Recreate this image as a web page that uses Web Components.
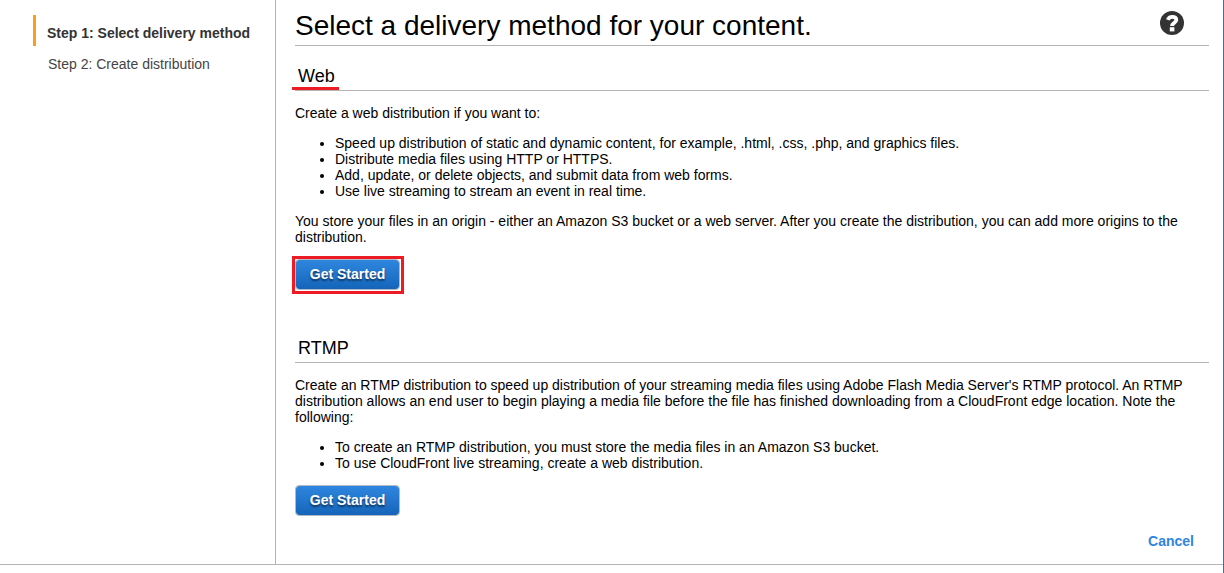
<!DOCTYPE html>
<html lang="en">
<head>
<meta charset="utf-8">
<title>Select a delivery method</title>
<style>
  html, body { height: 100%; margin: 0; }
  body { background: #fff; color: #000; font: 14px/16px "Liberation Sans", Arial, sans-serif; }
</style>
</head>
<body>
<distribution-wizard>
  <wizard-step slot="steps" current>Step 1: Select delivery method</wizard-step>
  <wizard-step slot="steps">Step 2: Create distribution</wizard-step>

  <page-title>Select a delivery method for your content.</page-title>

  <delivery-method name="Web" marked>
    <p>Create a web distribution if you want to:</p>
    <bullet-list>
      <bullet-item>Speed up distribution of static and dynamic content, for example, .html, .css, .php, and graphics files.</bullet-item>
      <bullet-item>Distribute media files using HTTP or HTTPS.</bullet-item>
      <bullet-item>Add, update, or delete objects, and submit data from web forms.</bullet-item>
      <bullet-item>Use live streaming to stream an event in real time.</bullet-item>
    </bullet-list>
    <p>You store your files in an origin - either an Amazon S3 bucket or a web server. After you create the distribution, you can add more origins to the distribution.</p>
  </delivery-method>

  <delivery-method name="RTMP">
    <p>Create an RTMP distribution to speed up distribution of your streaming media files using Adobe Flash Media Server's RTMP protocol. An RTMP distribution allows an end user to begin playing a media file before the file has finished downloading from a CloudFront edge location. Note the following:</p>
    <bullet-list>
      <bullet-item>To create an RTMP distribution, you must store the media files in an Amazon S3 bucket.</bullet-item>
      <bullet-item>To use CloudFront live streaming, create a web distribution.</bullet-item>
    </bullet-list>
  </delivery-method>

  <cancel-link slot="footer">Cancel</cancel-link>
</distribution-wizard>

<script>
  function define(name, html, setup) {
    const template = document.createElement('template');
    template.innerHTML = html;
    customElements.define(name, class extends HTMLElement {
      constructor() {
        super();
        this.attachShadow({ mode: 'open' }).append(template.content.cloneNode(true));
      }
      connectedCallback() {
        if (setup) setup(this, this.shadowRoot);
      }
    });
  }

  define('distribution-wizard', `
    <style>
      :host { display: block; box-sizing: border-box; min-height: 100%; border-right: 1px solid #1f78c8; }
      .columns { display: grid; grid-template-columns: 276px 1fr; border-bottom: 1px solid #b4b4b4; }
      nav { box-sizing: border-box; border-right: 1px solid #b4b4b4; padding: 15px 16px 0 33px; }
      main { padding: 0 14px 15px 19px; }
      footer { display: flex; justify-content: flex-end; padding: 17px 15px 0 0; }
    </style>
    <div class="columns">
      <nav aria-label="Steps"><slot name="steps"></slot></nav>
      <main><slot></slot><footer><slot name="footer"></slot></footer></main>
    </div>`);

  define('wizard-step', `
    <style>
      :host { display: block; box-sizing: border-box; height: 31px; line-height: 31px; padding-top: 3px; padding-left: 15px; color: #444; white-space: nowrap; }
      :host([current]) { border-left: 3px solid #ff9c1a; padding-left: 11px; color: #333; font-weight: bold; }
    </style>
    <slot></slot>`, (host) => {
      if (host.hasAttribute('current')) host.setAttribute('aria-current', 'step');
    });

  define('page-title', `
    <style>
      :host { display: flex; justify-content: space-between; align-items: center; height: 45px; padding-right: 24px; border-bottom: 1px solid #b4b4b4; }
      h1 { margin: 0; padding-top: 6px; font-size: 28px; line-height: 32px; font-weight: normal; }
      button { border: 0; padding: 0; background: none; width: 26px; height: 24px; display: flex; justify-content: center; cursor: pointer; }
      svg { display: block; width: 24px; height: 24px; }
    </style>
    <h1><slot></slot></h1>
    <button type="button" aria-label="Help">
      <svg viewBox="0 0 24 24" aria-hidden="true">
        <circle cx="12" cy="12" r="12" fill="#333"/>
        <path d="M7.8 8.8C8.6 6.6 10 5.8 12.2 5.8c2.4 0 4.1 1.2 4.1 3.1 0 2.7-4.2 2.9-4.2 6" fill="none" stroke="#fff" stroke-width="3.8"/>
        <rect x="9.8" y="16.2" width="4.6" height="4.2" fill="#fff"/>
      </svg>
    </button>`);

  define('delivery-method', `
    <style>
      :host { display: block; }
      :host(:not([marked])) { padding-top: 24px; }
      header { display: flex; height: 44px; align-items: flex-end; border-bottom: 1px solid #b4b4b4; }
      h2 { margin: 0; padding: 0 3px 4px; font-size: 18px; line-height: 20px; font-weight: normal; }
      :host([marked]) h2 { margin: 0 0 0 -3px; padding: 0 4px 1px 6px; border-bottom: 3px solid #ed1c24; }
      ::slotted(p) { margin: 14px 0; }
      .action { display: flex; width: max-content; }
      :host([marked]) .action { margin: -3px 0 0 -3px; border: 3px solid #ed1c24; padding: 0 1px 1px 0; }
    </style>
    <header><h2></h2></header>
    <slot></slot>
    <div class="action"><primary-button>Get Started</primary-button></div>`, (host, root) => {
      root.querySelector('h2').textContent = host.getAttribute('name');
    });

  define('bullet-list', `
    <style>
      :host { display: block; margin: 14px 0; padding-left: 40px; }
    </style>
    <slot></slot>`, (host) => host.setAttribute('role', 'list'));

  define('bullet-item', `
    <style>:host { display: list-item; list-style: disc; }</style>
    <slot></slot>`, (host) => host.setAttribute('role', 'listitem'));

  define('primary-button', `
    <style>
      :host { display: block; }
      button {
        box-sizing: border-box; width: 105px; height: 31px; padding: 0 0 2px; display: block;
        border: 1px solid #b0bac4; border-radius: 4px; cursor: pointer;
        background: linear-gradient(#2f86de, #1465ba); background-clip: padding-box;
        color: #fff; font: bold 14px/16px "Liberation Sans", Arial, sans-serif;
        text-shadow: 0 2px 2px rgba(0, 0, 0, .55);
      }
    </style>
    <button type="button"><slot></slot></button>`);

  define('cancel-link', `
    <style>
      a { color: #2e85de; font-weight: bold; text-decoration: none; }
      :host { display: block; }
    </style>
    <a href="#"><slot></slot></a>`);
</script>
</body>
</html>
